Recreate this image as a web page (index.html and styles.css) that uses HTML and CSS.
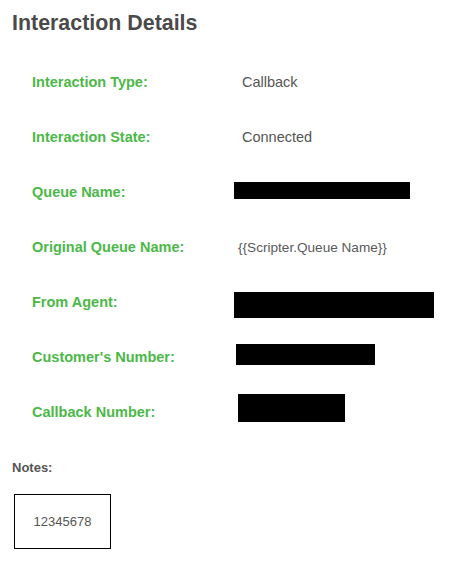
FILE: index.html
```html
<!DOCTYPE html>
<html>
<head>
<meta charset="utf-8">
<link rel="stylesheet" href="styles.css">
</head>
<body>
<div class="page">
  <h1 class="title">Interaction Details</h1>
  <div class="details">
    <div class="row">
      <div class="label">Interaction Type:</div>
      <div class="value">Callback</div>
    </div>
    <div class="row">
      <div class="label">Interaction State:</div>
      <div class="value">Connected</div>
    </div>
    <div class="row">
      <div class="label">Queue Name:</div>
      <div class="value"><span class="redact redact-queue"></span></div>
    </div>
    <div class="row">
      <div class="label">Original Queue Name:</div>
      <div class="value value-small">{{Scripter.Queue Name}}</div>
    </div>
    <div class="row">
      <div class="label">From Agent:</div>
      <div class="value"><span class="redact redact-agent"></span></div>
    </div>
    <div class="row">
      <div class="label">Customer's Number:</div>
      <div class="value"><span class="redact redact-customer"></span></div>
    </div>
    <div class="row">
      <div class="label">Callback Number:</div>
      <div class="value"><span class="redact redact-callback"></span></div>
    </div>
  </div>
  <div class="notes-label">Notes:</div>
  <div class="notes-box">12345678</div>
</div>
</body>
</html>
```
FILE: styles.css
```css
html, body {
  margin: 0;
  padding: 0;
  background: #ffffff;
}

.page {
  padding: 11px 0 0 12px;
  font-family: "Liberation Sans", Arial, sans-serif;
}

.title {
  margin: 0;
  font-size: 21.4px;
  line-height: 24px;
  font-weight: bold;
  color: #4a4a4a;
}

.details {
  margin-top: 20px;
  padding-left: 20px;
  display: flex;
  flex-direction: column;
}

.row {
  display: grid;
  grid-template-columns: 210px 1fr;
  height: 55px;
}

.label {
  font-size: 14.5px;
  line-height: 55px;
  font-weight: bold;
  color: #4cb848;
}

.value {
  font-size: 14.5px;
  line-height: 55px;
  color: #555555;
}

.value-small {
  font-size: 13.6px;
  margin-left: -4px;
  color: #5a5a5a;
}

.redact {
  display: block;
  background: #000000;
}

.redact-queue {
  width: 176px;
  height: 17px;
  margin-top: 17px;
  margin-left: -8px;
}

.redact-agent {
  width: 200px;
  height: 26px;
  margin-top: 17px;
  margin-left: -8px;
}

.redact-customer {
  width: 139px;
  height: 21px;
  margin-top: 14px;
  margin-left: -6px;
}

.redact-callback {
  width: 107px;
  height: 28px;
  margin-top: 9px;
  margin-left: -4px;
}

.notes-label {
  margin-top: 20px;
  font-size: 13px;
  line-height: 16px;
  font-weight: bold;
  color: #555555;
}

.notes-box {
  margin-top: 18px;
  margin-left: 2px;
  width: 95px;
  height: 53px;
  border: 1px solid #000000;
  display: flex;
  align-items: center;
  justify-content: center;
  font-size: 13px;
  color: #555555;
}
```
